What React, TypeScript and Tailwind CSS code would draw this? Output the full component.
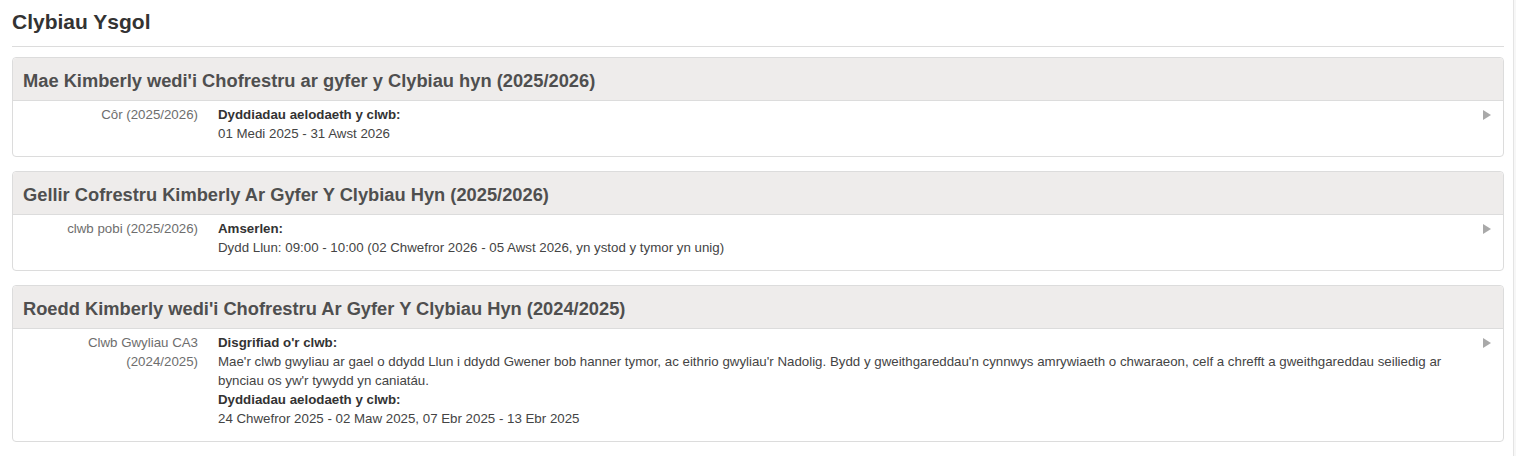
const clubs = [
  {
    heading: "Mae Kimberly wedi'i Chofrestru ar gyfer y Clybiau hyn (2025/2026)",
    name: ["Côr (2025/2026)"],
    fields: [{ label: "Dyddiadau aelodaeth y clwb:", lines: ["01 Medi 2025 - 31 Awst 2026"] }],
  },
  {
    heading: "Gellir Cofrestru Kimberly Ar Gyfer Y Clybiau Hyn (2025/2026)",
    name: ["clwb pobi (2025/2026)"],
    fields: [
      {
        label: "Amserlen:",
        lines: ["Dydd Llun: 09:00 - 10:00 (02 Chwefror 2026 - 05 Awst 2026, yn ystod y tymor yn unig)"],
      },
    ],
  },
  {
    heading: "Roedd Kimberly wedi'i Chofrestru Ar Gyfer Y Clybiau Hyn (2024/2025)",
    name: ["Clwb Gwyliau CA3", "(2024/2025)"],
    fields: [
      {
        label: "Disgrifiad o'r clwb:",
        lines: [
          "Mae'r clwb gwyliau ar gael o ddydd Llun i ddydd Gwener bob hanner tymor, ac eithrio gwyliau'r Nadolig. Bydd y gweithgareddau'n cynnwys amrywiaeth o chwaraeon, celf a chrefft a gweithgareddau seiliedig ar bynciau os yw'r tywydd yn caniatáu.",
        ],
      },
      { label: "Dyddiadau aelodaeth y clwb:", lines: ["24 Chwefror 2025 - 02 Maw 2025, 07 Ebr 2025 - 13 Ebr 2025"] },
    ],
  },
]

function ClubPanel({ club }: { club: (typeof clubs)[number] }) {
  return (
    <div className="rounded-[4px] border border-[#dcdcdc] bg-white">
      <div className="flex h-[43px] items-center rounded-t-[4px] border-b border-[#dcdcdc] bg-[#eeeceb] px-[10px] pt-[5px]">
        <h3 className="text-[18.3px] font-bold leading-none text-[#4f4f4f]">{club.heading}</h3>
      </div>
      <div className="flex pt-[4px] pb-[13px]">
        <div className="w-[185px] shrink-0 text-right text-[13.3px] leading-[19px] text-[#6e6e6e]">
          {club.name.map((n) => (
            <div key={n}>{n}</div>
          ))}
        </div>
        <div className="ml-[20px] flex-1 text-[13.3px] leading-[19px] text-[#444]">
          {club.fields.map((f) => (
            <div key={f.label}>
              <div className="font-bold text-[#333]">{f.label}</div>
              {f.lines.map((l) => (
                <div key={l}>{l}</div>
              ))}
            </div>
          ))}
        </div>
        <div className="flex w-[34px] shrink-0 justify-end pr-[12px] pt-[5px]">
          <svg width="8" height="10" viewBox="0 0 8 10">
            <path d="M0 0 L8 5 L0 10 Z" fill="#a9a9a9" />
          </svg>
        </div>
      </div>
    </div>
  )
}

export default function App() {
  return (
    <div className="flex min-h-[456px] w-[1516px] bg-white [font-family:'Liberation_Sans',sans-serif]">
      <div className="w-[1513px] pl-[12px] pr-[9px] pb-[15px]">
        <h2 className="flex h-[46px] items-center pb-[2px] text-[21px] font-bold text-[#333]">Clybiau Ysgol</h2>
        <div className="border-t border-[#dcdcdc]" />
        <div className="mt-[10px] flex flex-col gap-[14px]">
          {clubs.map((c) => (
            <ClubPanel key={c.heading} club={c} />
          ))}
        </div>
      </div>
      <div className="w-[3px] border-l border-[#e4e4e4] bg-[#f7f7f7]" />
    </div>
  )
}
